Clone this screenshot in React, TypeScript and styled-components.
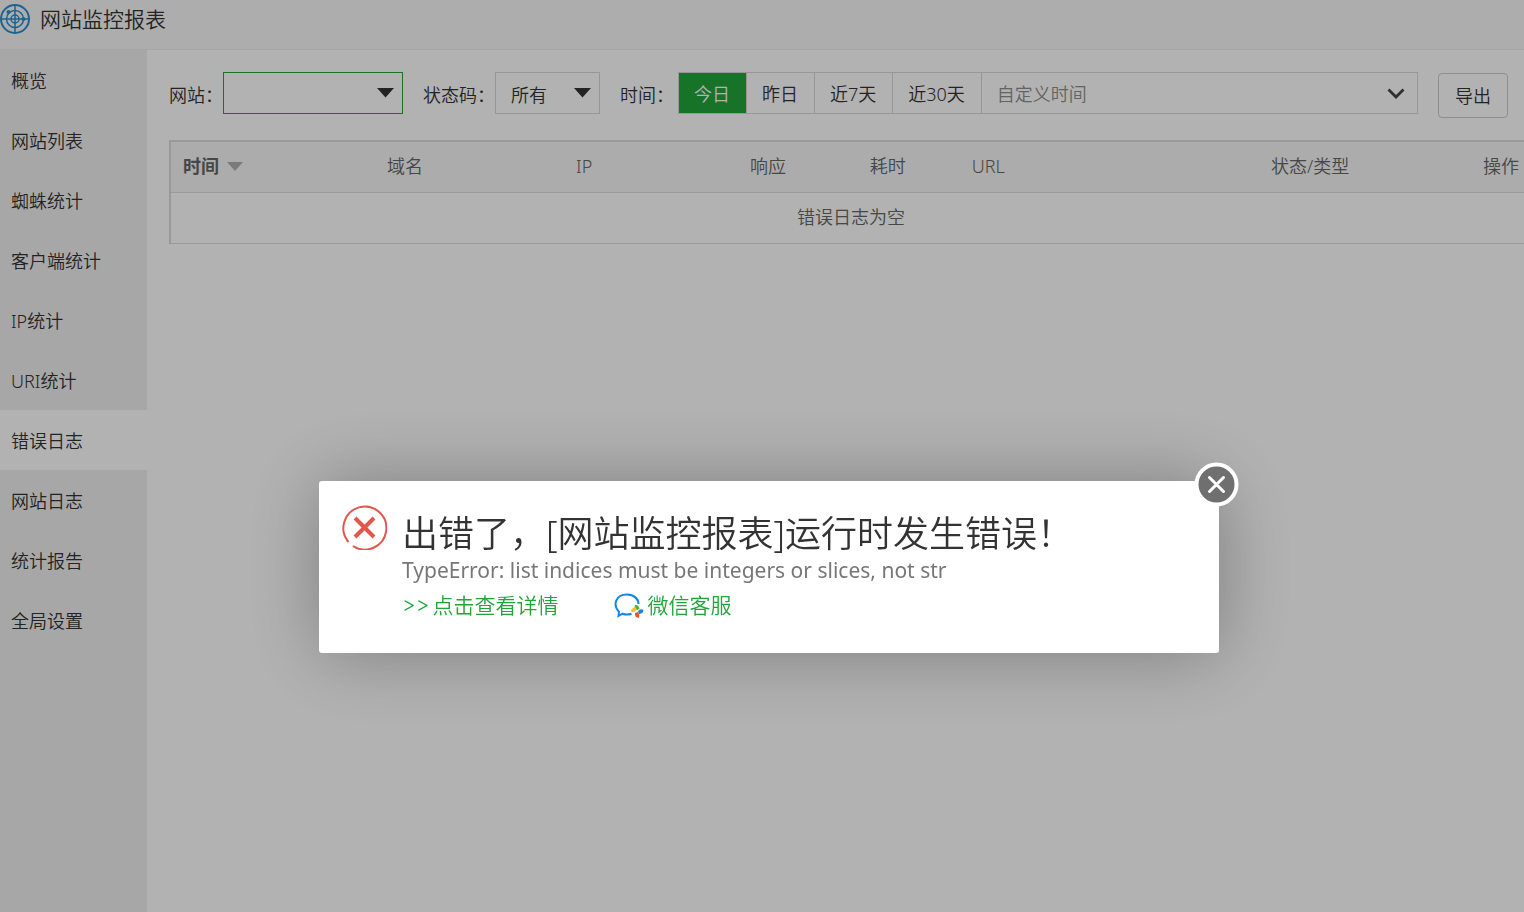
import React from "react";
import styled, { createGlobalStyle } from "styled-components";

const GlobalStyle = createGlobalStyle`
  * { box-sizing: border-box; }
  html, body, #root { height: 100%; }
  body {
    margin: 0;
    overflow: hidden;
    background: #fff;
    color: #333;
    font-family: "Noto Sans", "Noto Sans CJK SC", sans-serif;
    font-size: 18px;
    font-weight: 350;
  }
  button, input, select { font: inherit; color: inherit; margin: 0; }
`;

const Page = styled.div`
  display: flex;
  flex-direction: column;
  min-height: 100vh;
`;

const Header = styled.header`
  display: flex;
  align-items: center;
  gap: 10px;
  height: 50px;
  padding-bottom: 12px;
  background: #f8f8f8;
  border-bottom: 1px solid #eee;
`;

const Title = styled.h1`
  margin: 0;
  font-size: 21px;
  font-weight: 350;
  line-height: 36px;
`;

const Body = styled.div`
  display: flex;
  flex: 1;
`;

const Sidebar = styled.nav`
  flex: 0 0 147px;
  background: #f0f0f0;
`;

const NavLink = styled.a<{ $active?: boolean }>`
  display: block;
  height: 60px;
  padding-left: 11px;
  line-height: 62px;
  color: #333;
  text-decoration: none;
  background: ${(p) => (p.$active ? "#fff" : "transparent")};
`;

const Main = styled.main`
  flex: 1;
  min-width: 0;
  padding: 22px 0 0 22px;
  overflow: hidden;
`;

const Filters = styled.form`
  display: flex;
  align-items: flex-start;
  padding-right: 16px;
  margin-bottom: 22px;
`;

const Label = styled.label`
  line-height: 46px;
  white-space: nowrap;
`;

const Control = styled.div<{ $width?: number }>`
  position: relative;
  flex: ${(p) => (p.$width ? `0 0 ${p.$width}px` : "1")};
  height: 42px;
  min-width: 0;
  margin-right: 20px;
`;

const Select = styled.select<{ $focus?: boolean }>`
  appearance: none;
  width: 100%;
  height: 42px;
  padding: 3px 15px 0;
  border: 1px solid ${(p) => (p.$focus ? "#20a53a" : "#d9d9d9")};
  border-radius: 0;
  background: #fff;
  outline: none;
`;

const ControlIcon = styled.svg<{ $right: number }>`
  position: absolute;
  top: 16px;
  right: ${(p) => p.$right}px;
  pointer-events: none;
`;

const Range = styled.div`
  display: flex;
  flex: 1;
  min-width: 0;
  margin-left: 4px;
`;

const RangeButton = styled.button<{ $active?: boolean }>`
  height: 42px;
  padding: 0 16px 0 15px;
  border: 1px solid #d9d9d9;
  border-right-width: 0;
  white-space: nowrap;
  line-height: 42px;
  background: ${(p) => (p.$active ? "#20a53a" : "#fff")};
  color: ${(p) => (p.$active ? "#fff" : "#333")};
`;

const DateInput = styled.input`
  width: 100%;
  height: 42px;
  padding: 2px 15px 0;
  border: 1px solid #d9d9d9;
  outline: none;
  &::placeholder { color: #8f8f8f; opacity: 1; }
`;

const ExportButton = styled.button`
  align-self: flex-end;
  height: 45px;
  padding: 0 16px;
  border: 1px solid #ccc;
  border-radius: 4px;
  background: #fff;
  white-space: nowrap;
  line-height: 42px;
`;

const Table = styled.table`
  width: calc(100% + 9px);
  table-layout: fixed;
  border-collapse: separate;
  border-spacing: 0;
  border: 2px solid #dcdcdc;
  border-bottom: 0;
  color: #666;
`;

const Th = styled.th<{ $width?: string; $bold?: boolean; $right?: boolean }>`
  width: ${(p) => p.$width ?? "auto"};
  height: 51px;
  padding: 0 12px;
  background: #f6f6f6;
  border-bottom: 1px solid #ddd;
  text-align: ${(p) => (p.$right ? "right" : "left")};
  vertical-align: top;
  line-height: 48px;
  font-weight: ${(p) => (p.$bold ? 700 : 350)};
  white-space: nowrap;
`;

const SortButton = styled.button`
  display: flex;
  align-items: center;
  gap: 8px;
  height: 48px;
  padding: 0;
  border: 0;
  background: none;
`;

const EmptyCell = styled.td`
  height: 51px;
  padding: 0;
  border-bottom: 1px solid #ddd;
  text-align: center;
  vertical-align: top;
  line-height: 48px;
`;

const Shade = styled.div`
  position: fixed;
  inset: 0;
  background: rgba(0, 0, 0, 0.3);
`;

const Dialog = styled.section`
  position: absolute;
  top: 481px;
  left: calc(50% - 443px);
  display: flex;
  align-items: flex-start;
  gap: 15px;
  width: 900px;
  padding: 34px 23px 30px;
  border-radius: 3px;
  background: #fff;
  box-shadow: 1px 1px 75px rgba(0, 0, 0, 0.3);
`;

const ErrorIcon = styled.svg`
  flex: none;
  margin-top: -10px;
`;

const Heading = styled.h2`
  margin: 0;
  font-size: 36px;
  font-weight: 350;
  line-height: 38px;
`;

const Message = styled.p`
  margin: 0;
  font-size: 21px;
  font-weight: 400;
  line-height: 34px;
  color: #777;
`;

const Links = styled.div`
  display: flex;
  gap: 56px;
  font-size: 21px;
  line-height: 36px;
`;

const GreenLink = styled.a`
  display: flex;
  align-items: center;
  gap: 3px;
  color: #20a53a;
  text-decoration: none;
`;

const Arrows = styled.span`
  font-family: Inter, sans-serif;
`;

const CloseButton = styled.button`
  position: absolute;
  top: -19px;
  right: -20px;
  width: 45px;
  height: 45px;
  padding: 0;
  border: 0;
  background: none;
`;

const navItems = [
  "概览", "网站列表", "蜘蛛统计", "客户端统计", "IP统计", "URI统计",
  "错误日志", "网站日志", "统计报告", "全局设置",
];

const columns = [
  { name: "时间", width: "15%" },
  { name: "域名", width: "13.9%" },
  { name: "IP", width: "12.8%" },
  { name: "响应", width: "8.8%" },
  { name: "耗时", width: "7.5%" },
  { name: "URL", width: "22%" },
  { name: "状态/类型", width: "10%" },
  { name: "操作" },
];

const Caret = () => (
  <ControlIcon $right={9} width="17" height="10" viewBox="0 0 17 10" aria-hidden="true">
    <path d="M0 0h17L8.500 9.500z" fill="#333" />
  </ControlIcon>
);

export default function App() {
  return (
    <>
      <GlobalStyle />
      <Page>
        <Header>
          <svg width="30" height="30" viewBox="0 0 30 30" fill="none" stroke="#2a8fd0" aria-hidden="true">
            <circle cx="15" cy="15" r="14" strokeWidth="2" />
            <circle cx="15" cy="15" r="8.500" strokeWidth="1.500" />
            <circle cx="15" cy="15" r="4" strokeWidth="1.500" />
            <path d="M15 1v28M1 15h28" strokeWidth="1.500" />
            <circle cx="8.500" cy="8" r="2" fill="#2a8fd0" stroke="none" />
            <circle cx="23.500" cy="15" r="2" fill="#2a8fd0" stroke="none" />
          </svg>
          <Title>网站监控报表</Title>
        </Header>
        <Body>
          <Sidebar>
            {navItems.map((item) => (
              <NavLink href="#" key={item} $active={item === "错误日志"}>{item}</NavLink>
            ))}
          </Sidebar>
          <Main>
            <Filters>
              <Label htmlFor="site">网站：</Label>
              <Control $width={180}>
                <Select id="site" $focus><option value="" /></Select>
                <Caret />
              </Control>
              <Label htmlFor="status">状态码：</Label>
              <Control $width={105}>
                <Select id="status"><option>所有</option></Select>
                <Caret />
              </Control>
              <Label htmlFor="date">时间：</Label>
              <Range>
                <RangeButton type="button" $active>今日</RangeButton>
                <RangeButton type="button">昨日</RangeButton>
                <RangeButton type="button">近7天</RangeButton>
                <RangeButton type="button">近30天</RangeButton>
                <Control>
                  <DateInput id="date" placeholder="自定义时间" readOnly />
                  <ControlIcon $right={13} width="18" height="12" viewBox="0 0 18 12" fill="none" aria-hidden="true">
                    <path d="M1.500 1.500l7.500 7.500 7.500-7.500" stroke="#444" strokeWidth="2.800" />
                  </ControlIcon>
                </Control>
              </Range>
              <ExportButton type="button">导出</ExportButton>
            </Filters>
            <Table>
              <thead>
                <tr>
                  {columns.map((c, i) => (
                    <Th key={c.name} $width={c.width} $bold={i === 0} $right={i === columns.length - 1}>
                      {i === 0 ? (
                        <SortButton type="button">
                          {c.name}
                          <svg width="16" height="9" viewBox="0 0 16 9" aria-hidden="true">
                            <path d="M0 0h16L8 9z" fill="#b0b0b0" />
                          </svg>
                        </SortButton>
                      ) : (
                        c.name
                      )}
                    </Th>
                  ))}
                </tr>
              </thead>
              <tbody>
                <tr><EmptyCell colSpan={8}>错误日志为空</EmptyCell></tr>
              </tbody>
            </Table>
          </Main>
        </Body>
      </Page>
      <Shade>
        <Dialog role="dialog" aria-labelledby="error-title">
          <ErrorIcon width="45" height="45" viewBox="0 0 45 45" fill="none" stroke="#e2574c" aria-hidden="true">
            <path d="M6.500 37A21.500 21.500 0 1 1 11 41" strokeWidth="2" />
            <path d="M13 13l19 19M32 13L13 32" strokeWidth="4" />
          </ErrorIcon>
          <div>
            <Heading id="error-title">出错了，[网站监控报表]运行时发生错误！</Heading>
            <Message>TypeError: list indices must be integers or slices, not str</Message>
            <Links>
              <GreenLink href="#"><Arrows>&gt;&gt;</Arrows>点击查看详情</GreenLink>
              <GreenLink href="#">
                <svg width="30" height="26" viewBox="0 0 30 26" fill="none" aria-hidden="true">
                  <path d="M17.500 21.700C14.500 22.800 11.500 22.700 8.500 21.700L4.500 24 5 19.800C-1.500 13 1.500 2.500 13 2.500c7 0 11.500 4.500 11.500 9.500" stroke="#1485ee" strokeWidth="2" />
                  <path d="M21 13q4-.500 4.500 4l-2.500 1q-3.500-1.500-2-5z" fill="#4fb52c" />
                  <path d="M29.500 18q-.500 4-4.500 4l-1-2.500q2-3.500 5.500-1.500z" fill="#1485ee" />
                  <path d="M24.500 26q-4-.500-3.500-5l2.500-1q3 2 1 6z" fill="#f4511e" />
                  <path d="M17 19.500q.500-4 4.500-4.500l1 2.500q-1.500 4-5.500 2z" fill="#fbc02d" />
                </svg>
                微信客服
              </GreenLink>
            </Links>
          </div>
          <CloseButton type="button" aria-label="关闭">
            <svg width="45" height="45" viewBox="0 0 45 45" aria-hidden="true">
              <circle cx="22.500" cy="22.500" r="20" fill="#6f6f6f" stroke="#fff" strokeWidth="4" />
              <path d="M15.500 15.500l14 14M29.500 15.500l-14 14" stroke="#fff" strokeWidth="3" strokeLinecap="round" />
            </svg>
          </CloseButton>
        </Dialog>
      </Shade>
    </>
  );
}
